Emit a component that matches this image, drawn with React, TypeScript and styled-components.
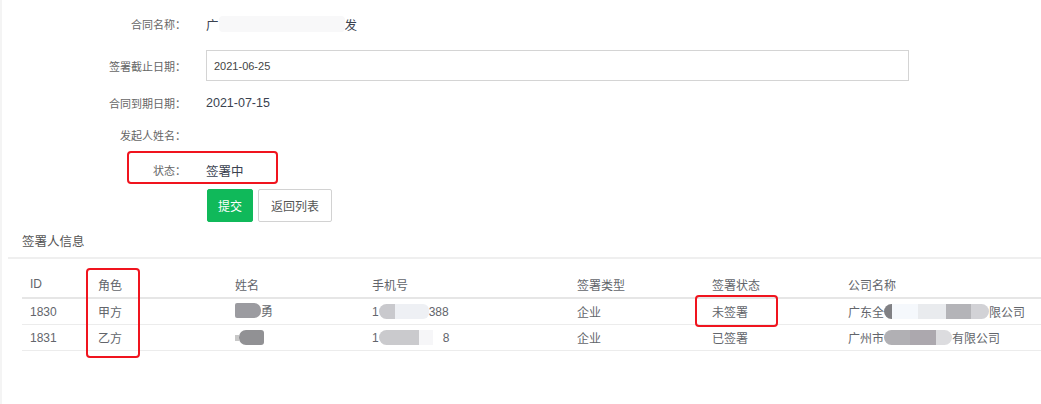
import React from "react";
import styled, { createGlobalStyle } from "styled-components";

const GlobalStyle = createGlobalStyle`
  html, body {
    margin: 0;
    padding: 0;
    background: #fff;
  }
  body {
    font-family: "Liberation Sans", "Noto Sans CJK SC", sans-serif;
    color: #333;
  }
`;

const Page = styled.div`
  position: relative;
  width: 1041px;
  height: 404px;
  box-sizing: border-box;
  border-left: 2px solid #f4f4f4;
  background: #fff;
  overflow: hidden;
`;

const Form = styled.div`
  display: flex;
  flex-direction: column;
  padding-top: 8px;
`;

const FormRow = styled.div<{ $top?: number; $height?: number }>`
  display: grid;
  grid-template-columns: 184px 1fr;
  column-gap: 20px;
  align-items: center;
  height: ${(p) => p.$height ?? 32}px;
  margin-top: ${(p) => p.$top ?? 0}px;
`;

const Label = styled.div`
  text-align: right;
  font-size: 11px;
  color: #666;
  white-space: nowrap;
`;

const Value = styled.div`
  font-size: 12.5px;
  color: #3a4250;
  white-space: nowrap;
  display: flex;
  align-items: center;
`;

const DateInput = styled.div`
  box-sizing: border-box;
  width: 703px;
  height: 31px;
  border: 1px solid #d4d4d4;
  display: flex;
  align-items: center;
  padding-left: 7px;
  font-size: 11px;
  color: #444;
`;

const Actions = styled.div`
  display: flex;
  gap: 5px;
  margin: 3px 0 0 205px;
`;

const Button = styled.button<{ $primary?: boolean }>`
  box-sizing: border-box;
  height: 33px;
  padding: 0 ${(p) => (p.$primary ? 10 : 12)}px;
  border-radius: 2px;
  font-family: "Noto Sans CJK SC", "Liberation Sans", sans-serif;
  font-size: 12px;
  cursor: pointer;
  border: 1px solid ${(p) => (p.$primary ? "#10b95a" : "#d2d2d2")};
  background: ${(p) => (p.$primary ? "#10b95a" : "#fff")};
  color: ${(p) => (p.$primary ? "#fff" : "#555")};
`;

const SectionTitle = styled.div`
  font-family: "Noto Sans CJK SC", sans-serif;
  font-size: 12.5px;
  color: #555;
  padding: 9px 0 0 20px;
  height: 22px;
`;

const Divider = styled.div`
  margin: 4px 0 0 6px;
  height: 2px;
  background: #efefef;
`;

const Table = styled.table`
  margin: 12px 0 0 20px;
  width: calc(100% - 20px);
  border-collapse: collapse;
  font-size: 12px;
  color: #62656b;
`;

const Th = styled.th<{ $w?: number }>`
  width: ${(p) => (p.$w ? `${p.$w}px` : "auto")};
  text-align: left;
  font-weight: normal;
  height: 26px;
  padding: 0 8px;
  border-bottom: 2px solid #e6e6e6;
  white-space: nowrap;
`;

const Td = styled.td`
  height: 25px;
  padding: 0 8px;
  border-bottom: 1px solid #ececec;
  white-space: nowrap;
`;

const Cell = styled.span`
  display: inline-flex;
  align-items: center;
`;

const Blur = styled.span<{ $w: number; $bg: string; $h?: number; $r?: string }>`
  display: inline-block;
  width: ${(p) => p.$w}px;
  height: ${(p) => p.$h ?? 15}px;
  background: ${(p) => p.$bg};
  border-radius: ${(p) => p.$r ?? "0"};
  filter: blur(0.6px);
`;

const Mark = styled.div<{ $x: number; $y: number; $w: number; $h: number }>`
  position: absolute;
  left: ${(p) => p.$x}px;
  top: ${(p) => p.$y}px;
  width: ${(p) => p.$w}px;
  height: ${(p) => p.$h}px;
  box-sizing: border-box;
  border: 2px solid #f0141e;
  border-radius: 4px;
  pointer-events: none;
`;

const signers = [
  {
    id: "1830",
    role: "甲方",
    name: (
      <Cell>
        <Blur $w={26} $bg="#9b9ba0" $r="2px 7px 7px 2px" />
        勇
      </Cell>
    ),
    phone: (
      <Cell>
        1
        <Blur $w={16} $bg="#c9c9cd" $r="8px 0 0 8px" />
        <Blur $w={34} $bg="#eef0f4" $r="0 6px 6px 0" />
        388
      </Cell>
    ),
    type: "企业",
    status: "未签署",
    company: (
      <Cell>
        广东全
        <Blur $w={8} $bg="#808084" $r="8px 0 0 8px" />
        <Blur $w={26} $bg="#f5f8fc" />
        <Blur $w={28} $bg="#e9ebee" />
        <Blur $w={25} $bg="#b4b4b8" />
        <Blur $w={18} $bg="#d2d2d6" $r="0 10px 10px 0" />
        限公司
      </Cell>
    ),
  },
  {
    id: "1831",
    role: "乙方",
    name: (
      <Cell>
        <Blur $w={4} $bg="#c8c8c8" $h={6} />
        <Blur $w={25} $bg="#919194" $r="7px 3px 3px 7px" />
      </Cell>
    ),
    phone: (
      <Cell>
        1
        <Blur $w={40} $bg="#cacacd" $r="8px 0 0 8px" />
        <Blur $w={14} $bg="#f6f6f8" />
        &nbsp;&nbsp;&nbsp;8
      </Cell>
    ),
    type: "企业",
    status: "已签署",
    company: (
      <Cell>
        广州市
        <Blur $w={26} $bg="#b1b0b4" $r="8px 0 0 8px" />
        <Blur $w={26} $bg="#aca8ae" />
        <Blur $w={16} $bg="#dcdcdf" $r="0 8px 8px 0" />
        有限公司
      </Cell>
    ),
  },
];

export default function App() {
  return (
    <>
      <GlobalStyle />
      <Page>
        <Form>
          <FormRow>
            <Label>合同名称：</Label>
            <Value>
              广
              <Blur $w={126} $bg="#f8f8f9" $h={16} $r="4px" />
              发
            </Value>
          </FormRow>
          <FormRow $top={10} $height={31}>
            <Label>签署截止日期：</Label>
            <DateInput>2021-06-25</DateInput>
          </FormRow>
          <FormRow $top={6}>
            <Label>合同到期日期：</Label>
            <Value>2021-07-15</Value>
          </FormRow>
          <FormRow>
            <Label>发起人姓名：</Label>
            <Value />
          </FormRow>
          <FormRow $top={3}>
            <Label>状态：</Label>
            <Value>签署中</Value>
          </FormRow>
          <Actions>
            <Button $primary>提交</Button>
            <Button>返回列表</Button>
          </Actions>
        </Form>

        <SectionTitle>签署人信息</SectionTitle>
        <Divider />

        <Table>
          <thead>
            <tr>
              <Th $w={52}>ID</Th>
              <Th $w={121}>角色</Th>
              <Th $w={121}>姓名</Th>
              <Th $w={189}>手机号</Th>
              <Th $w={119}>签署类型</Th>
              <Th $w={120}>签署状态</Th>
              <Th>公司名称</Th>
            </tr>
          </thead>
          <tbody>
            {signers.map((s) => (
              <tr key={s.id}>
                <Td>{s.id}</Td>
                <Td>{s.role}</Td>
                <Td>{s.name}</Td>
                <Td>{s.phone}</Td>
                <Td>{s.type}</Td>
                <Td>{s.status}</Td>
                <Td>{s.company}</Td>
              </tr>
            ))}
          </tbody>
        </Table>

        <Mark $x={125} $y={151} $w={151} $h={33} />
        <Mark $x={84} $y={268} $w={54} $h={90} />
        <Mark $x={693} $y={295} $w={83} $h={32} />
      </Page>
    </>
  );
}
